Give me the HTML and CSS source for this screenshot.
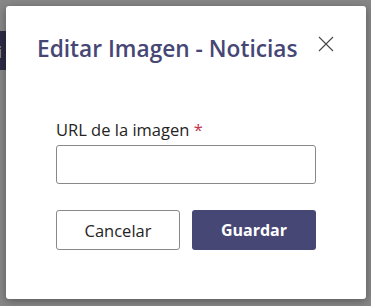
FILE: index.html
```html
<!DOCTYPE html>
<html lang="es">

<head>
    <meta charset="UTF-8">
    <meta name="viewport" content="width=device-width, initial-scale=1.0">
    <title>Editar Imagen - Noticias</title>
    <link rel="stylesheet" href="styles.css">
</head>

<body>

    <!-- page behind the overlay -->
    <div class="page-tab">i</div>

    <div class="overlay">
        <div class="dialog">
            <div class="dialog-header">
                <h1>Editar Imagen - Noticias</h1>
                <button class="close-btn" type="button" aria-label="Cerrar">
                    <svg width="16" height="16" viewBox="0 0 16 16">
                        <path d="M1 1 L15 15 M15 1 L1 15" stroke="#484644" stroke-width="1.1" fill="none" />
                    </svg>
                </button>
            </div>
            <form class="dialog-body">
                <label for="imageUrl">URL de la imagen <span class="required">*</span></label>
                <input type="text" id="imageUrl" name="imageUrl">
                <div class="actions">
                    <button type="button" class="btn btn-secondary">Cancelar</button>
                    <button type="submit" class="btn btn-primary">Guardar</button>
                </div>
            </form>
        </div>
    </div>

</body>

</html>
```

FILE: styles.css
```css
/* Basic Reset */
* {
    margin: 0;
    padding: 0;
    box-sizing: border-box;
}

body {
    font-family: 'Open Sans', 'Noto Sans', sans-serif;
    background-color: #878787;
    width: 371px;
    height: 306px;
    overflow: hidden;
}

/* bit of the page peeking out under the overlay */
.page-tab {
    position: absolute;
    left: 0;
    top: 31px;
    width: 8px;
    height: 39px;
    background-color: #2b2b45;
    color: #8fa3c9;
    font-size: 16px;
    line-height: 42px;
    text-indent: -2px;
    overflow: hidden;
}

.overlay {
    position: relative;
    padding: 6px 5px 7px 6px;
}

/* Dialog */
.dialog {
    background-color: #fff;
    width: 360px;
    height: 293px;
    border-radius: 3px;
    box-shadow: 0 2px 8px rgba(0, 0, 0, 0.35);
    padding: 28px 31px 0 31px;
}

.dialog-header {
    display: flex;
    justify-content: space-between;
    align-items: flex-start;
}

h1 {
    font-size: 22.7px;
    font-weight: 600;
    color: #464775;
    line-height: 30px;
    white-space: nowrap;
}

.close-btn {
    background: none;
    border: none;
    cursor: pointer;
    margin-top: 2px;
    margin-right: 1px;
    width: 16px;
    height: 16px;
    flex-shrink: 0;
}

.dialog-body {
    padding: 55px 19px 0 19px;
}

label {
    display: block;
    font-size: 16.5px;
    color: #252423;
    line-height: 22px;
    margin-bottom: 4px;
}

.required {
    color: #c4314b;
}

input[type="text"] {
    width: 260px;
    height: 39px;
    border: 1px solid #8a8886;
    border-radius: 3px;
    padding: 0 10px;
    font-size: 15px;
    outline: none;
}

.actions {
    display: flex;
    gap: 12px;
    margin-top: 26px;
}

.btn {
    width: 124px;
    height: 40px;
    border-radius: 3px;
    font-family: 'Open Sans', 'Noto Sans', sans-serif;
    font-size: 16.5px;
    cursor: pointer;
}

.btn-secondary {
    background-color: #fff;
    border: 1px solid #8a8886;
    color: #252423;
}

.btn-primary {
    background-color: #464775;
    border: none;
    color: #fff;
    font-weight: 700;
    font-size: 16px;
}
```
